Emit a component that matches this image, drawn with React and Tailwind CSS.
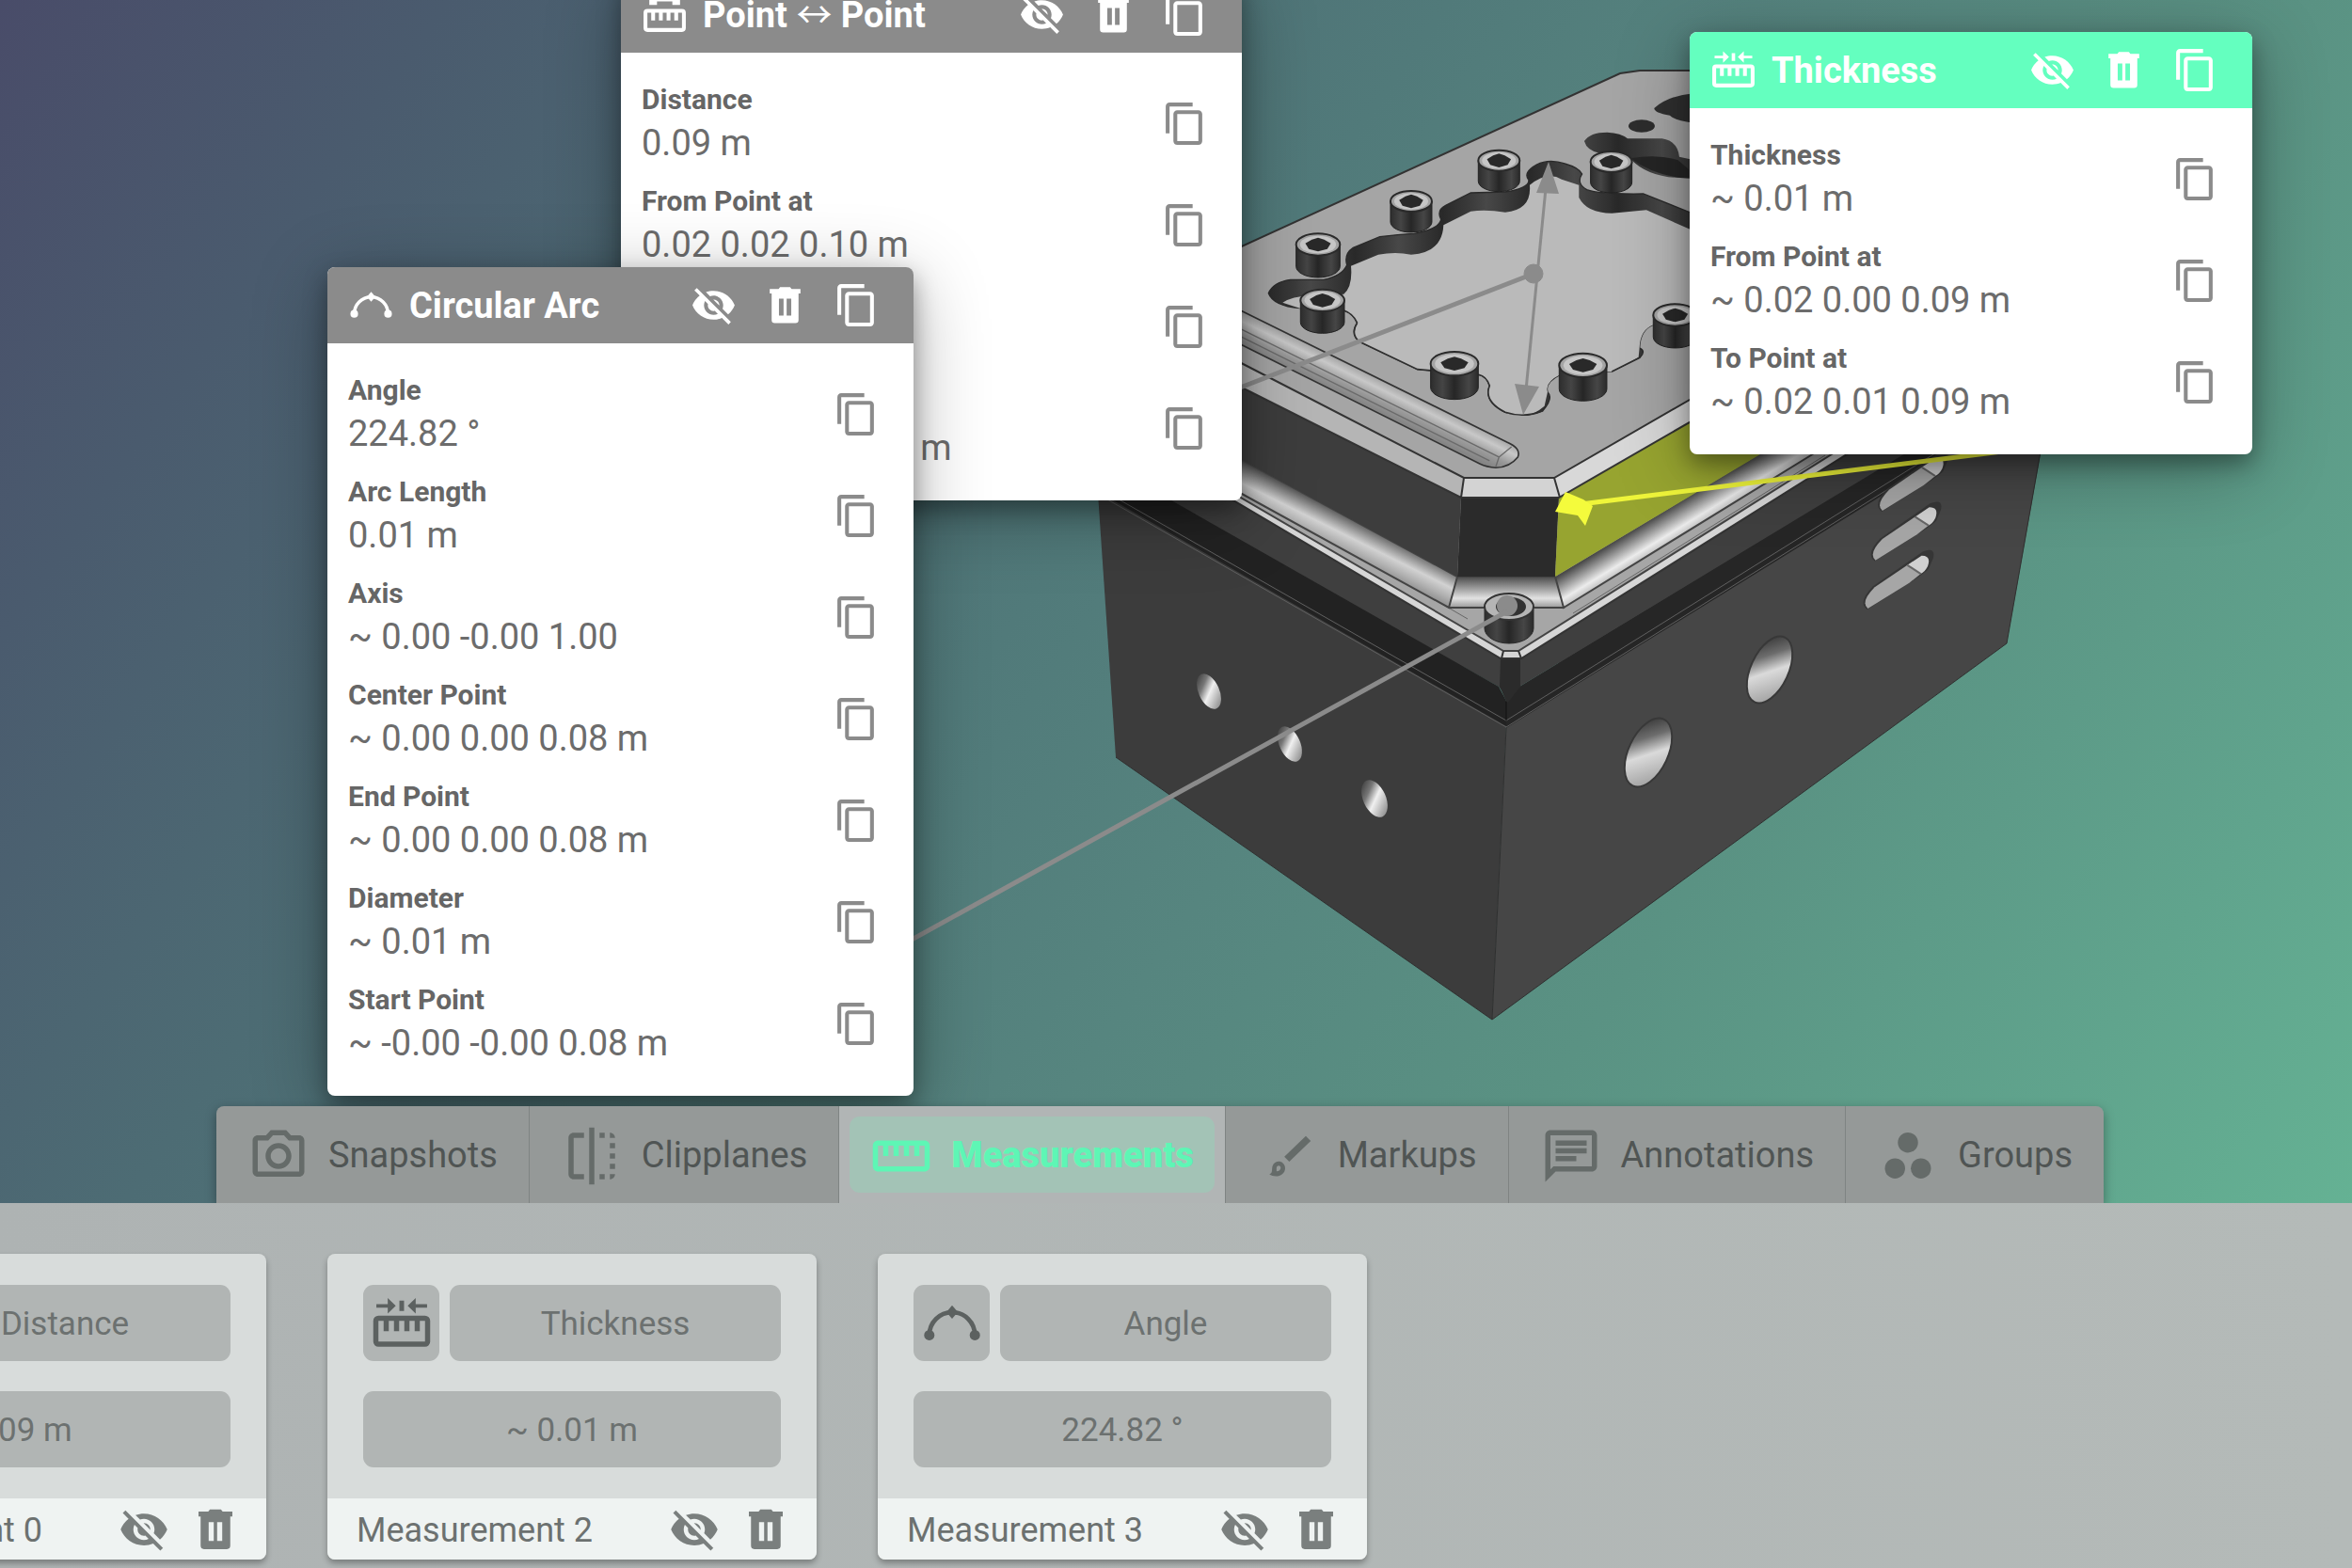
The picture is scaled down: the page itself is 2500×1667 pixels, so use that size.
import React, { useState } from 'react';
import { MdContentCopy, MdVisibilityOff, MdOutlinePhotoCamera, MdFlip, MdStraighten, MdOutlineChat } from 'react-icons/md';

function TrashIcon({ className }) {
    return (
        <svg viewBox="0 0 24 24" fill="currentColor" className={className} aria-hidden="true">
            <path fillRule="evenodd" d="M8.6 3.5l.8-.9h5.2l.8.9H20v2.4H4V3.5zM5 5.900h14v13.800a1.6 1.6 0 0 1-1.6 1.6H6.6A1.6 1.6 0 0 1 5 19.7zM8.8 8.6v8.8h2.4V8.6zM12.8 8.6v8.8h2.4V8.6z" />
        </svg>
    );
}

function Ruler() {
    return (
        <>
            <rect x="2" y="10" width="20" height="10" rx="1" fill="none" stroke="currentColor" strokeWidth="2" />
            <path d="M5 10h2v5H5zM9 10h2v5H9zM13 10h2v5h-2zM17 10h2v5h-2z" />
        </>
    );
}

function ThicknessIcon({ className }) {
    return (
        <svg viewBox="0 0 24 24" fill="currentColor" className={className} aria-hidden="true">
            <Ruler />
            <path d="M2.2 4.5h4.4V2.2L9.7 5.2 6.6 8.2V5.9H2.2zM11.1 3.2h1.8v4h-1.8zM21.8 4.5h-4.4V2.2l-3.1 3 3.1 3V5.9h4.4z" />
        </svg>
    );
}

function DistanceIcon({ className }) {
    return (
        <svg viewBox="0 0 24 24" fill="currentColor" className={className} aria-hidden="true">
            <Ruler />
            <path d="M4 2h4v1.6h8V2h4v5h-4V5.2H8V7H4z" />
        </svg>
    );
}

function ArcIcon({ className }) {
    return (
        <svg viewBox="0 0 24 24" fill="currentColor" className={className} aria-hidden="true">
            <path d="M3.2 16.5a8.8 8.8 0 0 1 17.6 0" fill="none" stroke="currentColor" strokeWidth="1.7" />
            <circle cx="3.2" cy="16.5" r="2" />
            <circle cx="20.8" cy="16.5" r="2" />
            <path d="M12 5l2.2 2.6L12 10.200 9.800 7.600z" />
        </svg>
    );
}

function BrushIcon({ className }) {
    return (
        <svg viewBox="0 0 24 24" fill="currentColor" className={className} aria-hidden="true">
            <path d="M18.900 4.300l1.900 1.900-8.300 8-1.900-1.900z" />
            <path d="M4.800 19c1.500-.4.800-2 1.300-3.300.6-1.500 2.600-2.100 3.900-1s1.200 3.200-.2 4.300c-1.400 1.200-3.700 1-5 0zm2.800-1.100c1.600.1 2.200-1.900.9-2.200-1.300.1-.8 1.400-.9 2.200z" fillRule="evenodd" />
        </svg>
    );
}

function GroupsIcon({ className }) {
    return (
        <svg viewBox="0 0 24 24" fill="currentColor" className={className} aria-hidden="true">
            <circle cx="12" cy="6.800" r="3.900" />
            <circle cx="7" cy="16.800" r="3.900" />
            <circle cx="17" cy="16.800" r="3.900" />
        </svg>
    );
}

const tabs = [
    { id: 'snapshots', label: 'Snapshots', icon: MdOutlinePhotoCamera },
    { id: 'clipplanes', label: 'Clipplanes', icon: MdFlip },
    { id: 'measurements', label: 'Measurements', icon: MdStraighten },
    { id: 'markups', label: 'Markups', icon: BrushIcon },
    { id: 'annotations', label: 'Annotations', icon: MdOutlineChat },
    { id: 'groups', label: 'Groups', icon: GroupsIcon },
];

const measurements = [
    { name: 'Measurement 0', type: 'Distance', value: '0.09 m', icon: DistanceIcon },
    { name: 'Measurement 2', type: 'Thickness', value: '~ 0.01 m', icon: ThicknessIcon },
    { name: 'Measurement 3', type: 'Angle', value: '224.82 °', icon: ArcIcon },
];

const pointRows = [
    ['Distance', '0.09 m'],
    ['From Point at', '0.02 0.02 0.10 m'],
    ['To Point at', '0.02 0.10 0.10 m'],
    ['Direction', '~ 0.00 -0.09 0.00 m'],
];

const arcRows = [
    ['Angle', '224.82 °'],
    ['Arc Length', '0.01 m'],
    ['Axis', '~ 0.00 -0.00 1.00'],
    ['Center Point', '~ 0.00 0.00 0.08 m'],
    ['End Point', '~ 0.00 0.00 0.08 m'],
    ['Diameter', '~ 0.01 m'],
    ['Start Point', '~ -0.00 -0.00 0.08 m'],
];

const thicknessRows = [
    ['Thickness', '~ 0.01 m'],
    ['From Point at', '~ 0.02 0.00 0.09 m'],
    ['To Point at', '~ 0.02 0.01 0.09 m'],
];

// [x, y, radius] of the cap screws around the pocket
const screws = [
    [303, 600, 70],
    [317, 778, 70],
    [600, 462, 66],
    [880, 332, 66],
    [1238, 336, 66],
    [738, 980, 76],
    [1148, 985, 76],
    [1442, 825, 70],
];

// offsets of the three ventilation slots from the lowest one
const slots = [
    [0, 0],
    [20, -122],
    [38, -247],
];

function Screw({ x, y, r }) {
    const ry = r * 0.5;
    return (
        <g>
            <path d={`M${x - r} ${y}v${r}a${r} ${ry} 0 0 0 ${2 * r} 0v${-r}z`} fill="url(#screwBody)" stroke="#222" strokeWidth="3" />
            <ellipse cx={x} cy={y} rx={r} ry={ry} fill="#a4a4a4" stroke="#2a2a2a" strokeWidth="6" />
            <ellipse cx={x} cy={y} rx={r * 0.82} ry={ry * 0.8} fill="#c6c6c6" />
            <path d={`M${x - r * 0.58} ${y - 4}l${r * 0.3} -12l${r * 0.28} -6l${r * 0.28} 6l${r * 0.3} 12l${-r * 0.16} 18l${-r * 0.42} 8l${-r * 0.42} -8z`} fill="#292929" />
        </g>
    );
}

function Scene() {
    return (
        <svg viewBox="0 0 2500 1667" preserveAspectRatio="xMinYMin slice" className="absolute inset-0 h-full w-full" aria-hidden="true">
            <defs>
                <linearGradient id="screwBody">
                    <stop offset="0" stopColor="#2d2d2d" />
                    <stop offset=".25" stopColor="#454545" />
                    <stop offset=".5" stopColor="#262626" />
                    <stop offset=".8" stopColor="#464646" />
                    <stop offset="1" stopColor="#2a2a2a" />
                </linearGradient>
                <linearGradient id="wall" gradientUnits="userSpaceOnUse" x1="0" y1="0" x2="280" y2="0" spreadMethod="repeat">
                    <stop offset="0" stopColor="#484848" />
                    <stop offset=".5" stopColor="#292929" />
                    <stop offset=".8" stopColor="#3a3a3a" />
                    <stop offset="1" stopColor="#484848" />
                </linearGradient>
                <linearGradient id="groove" gradientUnits="userSpaceOnUse" x1="500" y1="1020" x2="455" y2="1112">
                    <stop offset="0" stopColor="#999" />
                    <stop offset=".35" stopColor="#c8c8c8" />
                    <stop offset=".7" stopColor="#999" />
                    <stop offset="1" stopColor="#858585" />
                </linearGradient>
                <linearGradient id="filletLeft" gradientUnits="userSpaceOnUse" x1="1440" y1="550" x2="1421" y2="588">
                    <stop offset="0" stopColor="#4a4a4a" />
                    <stop offset=".5" stopColor="#d2d2d2" />
                    <stop offset=".75" stopColor="#b0b0b0" />
                    <stop offset="1" stopColor="#8a8a8a" />
                </linearGradient>
                <linearGradient id="filletRight" gradientUnits="userSpaceOnUse" x1="1762" y1="548" x2="1784" y2="584">
                    <stop offset="0" stopColor="#4a4a4a" />
                    <stop offset=".55" stopColor="#ececec" />
                    <stop offset="1" stopColor="#8a8a8a" />
                </linearGradient>
                <linearGradient id="filletFront" x1="0" y1="0" x2="0" y2="1">
                    <stop offset="0" stopColor="#4a4a4a" />
                    <stop offset=".7" stopColor="#e2e2e2" />
                    <stop offset="1" stopColor="#999" />
                </linearGradient>
                <linearGradient id="hole" x1=".2" y1="0" x2=".7" y2="1">
                    <stop offset="0" stopColor="#3a3a3a" />
                    <stop offset=".3" stopColor="#777" />
                    <stop offset=".55" stopColor="#f0f0f0" />
                    <stop offset="1" stopColor="#8c8c8c" />
                </linearGradient>
                <linearGradient id="bigHole" x1=".2" y1="0" x2=".7" y2="1">
                    <stop offset="0" stopColor="#333" />
                    <stop offset=".3" stopColor="#6c6c6c" />
                    <stop offset=".55" stopColor="#dadada" />
                    <stop offset="1" stopColor="#a0a0a0" />
                </linearGradient>
            </defs>

            {/* lower housing */}
            <path d="M1164 480L1186 805L1586 1084L1601 770L1400 500z" fill="#3c3c3c" />
            <path d="M1601 770L1586 1084L2133 684L2180 420L1900 420z" fill="#464646" />
            <path d="M1186 805L1586 1084L2133 684L2176 440M1601 774L1586 1084" fill="none" stroke="#303030" strokeWidth="1" />
            <path d="M1601 766V731L1615 730L2060 460L2090 460L2060 490L1601 774z" fill="#262626" />
            <path d="M1164 490L1593 730L1601 740L1615 730L2060 461L1900 420L1300 420L1164 440z" fill="#3f3f3f" />
            <path d="M1166 487L1593 730L1601 745V772L1166 522z" fill="#222" />
            <path d="M1170 520L1601 766L2060 480" fill="none" stroke="#606060" strokeWidth="1" />
            <path d="M1170 527L1601 773L2060 487" fill="none" stroke="#606060" strokeWidth="1" />
            <path d="M1595 698h21v32l-14 18l-8-18z" fill="#2b2b2b" />
            <path d="M1601 746v20" stroke="#111" strokeWidth="1" />

            {/* flange */}
            <path d="M1240 490L1595 700H1617L1990 466L1900 420H1300z" fill="#d6d6d6" stroke="#333" strokeWidth="2" />
            <path d="M1240 483L1598 692H1614L1977 464L1900 420H1300z" fill="#a6a6a6" stroke="#444" strokeWidth="2" />
            <path d="M1598 692L1596 700M1614 692L1617 700" stroke="#333" strokeWidth="2" />
            <path d="M1300 506L1560 658M1672 652L1940 484" stroke="#666" strokeWidth="1" />
            <path d="M1300 478L1549 613L1540 646L1300 514z" fill="url(#filletLeft)" />
            <path d="M1653 613L1890 471L1946 471L1662 646z" fill="url(#filletRight)" />
            <path d="M1549 613H1653L1662 646H1540z" fill="url(#filletFront)" />
            <path d="M1300 478L1549 613L1540 646L1300 514M1549 613H1653L1662 646H1540M1653 613L1662 646L1946 471" fill="none" stroke="#444" strokeWidth="2" />

            {/* raised block */}
            <path d="M1300 400L1553 528L1549 613L1300 478z" fill="#3d3d3d" />
            <path d="M1553 529H1657L1653 613H1549z" fill="#2b2b2b" />
            <path d="M1657 529L1860 412L1990 412L1653 613z" fill="#97a430" />
            <path d="M1300 376L1556 508L1553 529L1300 402z" fill="#b5b5b5" />
            <path d="M1556 508H1652L1658 529H1553z" fill="#d3d3d3" />
            <path d="M1652 508L1860 388V412L1658 529z" fill="#d8d8d8" />
            <path d="M1300 271L1722 78L1743 75H1900V366L1652 508H1556L1300 376z" fill="#a5a5a5" />
            <path d="M1300 271L1722 78L1743 75H1900M1300 376L1556 508H1652L1860 388M1556 508L1553 529M1652 508L1658 529M1300 402L1553 529H1657L1860 412" fill="none" stroke="#333" strokeWidth="2" />

            {/* details of the top face */}
            <g transform="translate(1300 60) scale(.3333)">
                <path d="M30 797L905 1230Q952 1250 940 1278Q915 1310 870 1312Q840 1310 820 1300L30 905z" fill="url(#groove)" />
                <path d="M30 797L905 1230Q952 1250 940 1278Q915 1310 870 1312Q840 1310 820 1300L30 905" fill="none" stroke="#333" strokeWidth="5" />
                <path d="M30 856L880 1278L920 1245M880 1278L870 1308M30 880L850 1290" fill="none" stroke="#6a6a6a" strokeWidth="4" />
                <path
                    d="M145 755Q160 720 215 712H320Q380 700 395 665Q385 630 415 610L500 575Q560 568 610 565Q690 550 695 520Q680 490 710 475L790 435L900 432Q975 420 975 395Q955 370 1000 345Q1040 325 1090 342Q1135 355 1145 375Q1125 405 1160 425Q1200 440 1340 438L1520 510V830L1375 855Q1330 870 1328 930Q1350 940 1330 960L1240 1005L1075 1015Q1025 1040 1035 1070Q1055 1090 1020 1130Q960 1155 900 1135Q830 1100 850 1050Q840 1020 815 1015L620 998L435 910Q405 885 428 850Q415 820 385 810L245 803Q160 795 145 755z"
                    fill="url(#wall)"
                    stroke="#2a2a2a"
                    strokeWidth="4"
                />
                <path
                    d="M190 785Q230 760 290 765L385 758Q414 735 408 668L495 632Q550 622 600 632Q700 625 703 538L790 494Q840 488 900 497Q985 490 978 410Q1035 365 1080 392L1135 410V450Q1160 500 1240 500L1350 490L1520 565V830L1375 855Q1330 870 1328 930L1325 960L1240 1005L1075 1015Q1025 1040 1035 1070L1025 1115Q990 1145 960 1145Q930 1150 900 1135Q830 1100 850 1050Q840 1020 815 1015L620 998L435 910Q405 885 428 850Q415 820 385 810L245 803z"
                    fill="#bababa"
                />
                <path d="M428 850Q405 885 435 910L620 998L815 1015Q840 1020 850 1050Q830 1100 900 1135Q960 1155 1020 1130M1240 1005L1330 960M385 810Q415 820 428 850" fill="none" stroke="#2f2f2f" strokeWidth="5" />
                <ellipse cx="1335" cy="222" rx="42" ry="20" fill="#2d2d2d" />
                <path d="M1152 270Q1170 242 1225 242Q1270 244 1290 262H1400Q1450 270 1455 320L1500 330V390L1420 385Q1330 370 1290 315L1200 308Q1160 300 1152 270z" fill="url(#wall)" />
                <path d="M1300 325Q1380 310 1450 330L1485 360V388Q1380 385 1300 325z" fill="#252525" />
                <path d="M1375 165Q1420 125 1500 118V212Q1440 205 1425 188Q1375 180 1375 165z" fill="#303030" />
                {screws.map(([x, y, r]) => (
                    <Screw key={`${x}-${y}`} x={x} y={y} r={r} />
                ))}
            </g>

            {/* bores */}
            <g fill="url(#hole)">
                <ellipse cx="1285" cy="735" rx="11" ry="20" transform="rotate(-24 1285 735)" />
                <ellipse cx="1371" cy="791" rx="11" ry="20" transform="rotate(-24 1371 791)" />
                <ellipse cx="1461" cy="849" rx="12" ry="21" transform="rotate(-24 1461 849)" />
            </g>
            <g fill="url(#bigHole)" stroke="#383838" strokeWidth="2">
                <ellipse cx="1881" cy="712" rx="20" ry="38" transform="rotate(25 1881 712)" />
                <ellipse cx="1752" cy="800" rx="21" ry="39" transform="rotate(25 1752 800)" />
            </g>
            <g transform="translate(1560 440) scale(.4082 .4209)">
                {slots.map(([dx, dy]) => (
                    <g key={dy} transform={`translate(${dx} ${dy})`}>
                        <path d="M1040 494Q1015 475 1055 436L1185 348Q1220 335 1212 365L1200 392Q1190 402 1150 427z" fill="#363636" />
                        <path d="M1042 492Q1022 475 1060 438L1145 382L1180 404L1150 427z" fill="#a6a6a6" />
                        <path d="M1145 382L1182 358Q1208 358 1198 385Q1190 400 1180 404z" fill="#d0d0d0" />
                        <path d="M1145 382L1180 404" stroke="#666" strokeWidth="5" />
                    </g>
                ))}
            </g>

            {/* corner screw */}
            <path d="M1578 648v20a26 16 0 0 0 52 0v-20z" fill="url(#screwBody)" stroke="#2a2a2a" strokeWidth="1" />
            <ellipse cx="1604" cy="645" rx="26" ry="14" fill="#b5b5b5" stroke="#333" strokeWidth="2" />
            <ellipse cx="1606" cy="645" rx="16" ry="10" fill="#333" />
            <circle cx="1602" cy="644" r="11" fill="#8b8b8b" />

            {/* leaders */}
            <g stroke="#8b8b8b" fill="#8b8b8b">
                <path d="M1602 650L940 1015M1630 291L1290 423" strokeWidth="5" />
                <path d="M1645 180L1620 435" strokeWidth="3" />
                <circle cx="1630" cy="291" r="10" />
                <path d="M1646 172L1633 205L1657 206zM1610 408L1636 411L1619 441z" stroke="none" />
            </g>
            <path d="M1680 536L2160 476" stroke="#eff53a" strokeWidth="5" />
            <path d="M1653 544L1664 523L1683 531L1693 538L1685 559L1677 548z" fill="#f4fb3c" />
        </svg>
    );
}

function MeasureCard({ title, icon: Icon, rows, active, className }) {
    return (
        <section className={`absolute overflow-hidden rounded-lg bg-white shadow-[0_10px_24px_rgba(0,0,0,0.35),0_16px_80px_rgba(0,0,0,0.3)] ${className}`}>
            <header className={`flex h-[81px] items-center pl-[22px] pr-9 text-white ${active ? 'bg-[#64ffbf]' : 'bg-[#8b8b8b]'}`}>
                <Icon className="mr-4 size-[49px] shrink-0" />
                <h2 className="flex-1 whitespace-nowrap text-[38px] leading-[48px] font-bold">{title}</h2>
                <div className="flex gap-[27px]">
                    <button type="button" aria-label="Hide"><MdVisibilityOff className="size-[49px]" /></button>
                    <button type="button" aria-label="Delete"><TrashIcon className="size-[49px]" /></button>
                    <button type="button" aria-label="Copy all"><MdContentCopy className="size-[49px]" /></button>
                </div>
            </header>
            <dl className="pt-[21px] pb-[23px]">
                {rows.map(([label, value]) => (
                    <div key={label} className="flex h-[108px] items-center justify-between pl-[22px] pr-9">
                        <div className="whitespace-nowrap pt-1">
                            <dt className="text-[30px] leading-[38px] font-bold text-[#666]">{label}</dt>
                            <dd className="text-[38px] leading-[54px] text-[#6c6c6c]">{value}</dd>
                        </div>
                        <button type="button" aria-label={`Copy ${label}`} className="text-[#8b8b8b]">
                            <MdContentCopy className="size-[49px]" />
                        </button>
                    </div>
                ))}
            </dl>
        </section>
    );
}

function MeasurementTile({ name, type, value, icon: Icon }) {
    return (
        <article className="w-[520px] shrink-0 overflow-hidden rounded-lg bg-[#d8dcdb] text-[#6c7170] shadow-[0_4px_6px_rgba(0,0,0,0.3)]">
            <div className="flex flex-col gap-8 px-[38px] py-[33px] text-[35px]">
                <div className="flex gap-[11px]">
                    <div className="flex size-[81px] items-center justify-center rounded-[11px] bg-[#b1b5b4] text-[#5c6160]">
                        <Icon className="size-[66px]" />
                    </div>
                    <div className="flex h-[81px] flex-1 items-center justify-center rounded-[11px] bg-[#b1b5b4] pt-1">{type}</div>
                </div>
                <div className="flex h-[81px] items-center justify-center rounded-[11px] bg-[#b1b5b4] pt-1">{value}</div>
            </div>
            <footer className="flex h-[65px] items-center bg-[#eff3f2] pl-[31px] pr-[27px]">
                <span className="flex-1 whitespace-nowrap pt-0.5 text-[36px]">{name}</span>
                <div className="flex gap-[22px] text-[#7a7f7e]">
                    <button type="button" aria-label={`Hide ${name}`}><MdVisibilityOff className="size-[54px]" /></button>
                    <button type="button" aria-label={`Delete ${name}`}><TrashIcon className="size-[54px]" /></button>
                </div>
            </footer>
        </article>
    );
}

function App() {
    const [activeTab, setActiveTab] = useState('measurements');

    return (
        <div className="relative flex min-h-screen flex-col overflow-hidden bg-linear-[125deg,#494c69_0%,#4a5b6e_13%,#4d6c74_28%,#517a7a_42%,#56857f_53%,#5a9283_67%,#60a48d_82%,#68bb98_100%] font-['Roboto',sans-serif]">
            <Scene />

            <MeasureCard
                title={<>Point <span className="font-['Noto_Sans_CJK_JP',sans-serif] leading-none font-normal">↔</span> Point</>}
                icon={DistanceIcon}
                rows={pointRows}
                className="-top-[25px] left-[660px] w-[660px]"
            />
            <MeasureCard title="Circular Arc" icon={ArcIcon} rows={arcRows} className="top-[284px] left-[348px] w-[623px]" />
            <MeasureCard title="Thickness" icon={ThicknessIcon} rows={thicknessRows} active className="top-[34px] left-[1796px] w-[598px]" />

            <div className="relative mt-auto">
                <nav role="tablist" className="flex justify-center pr-[34px]">
                    <div className="flex overflow-hidden rounded-t-lg shadow-[0_4px_12px_rgba(0,0,0,0.35)]">
                        {tabs.map(({ id, label, icon: Icon }) => (
                            <button
                                key={id}
                                type="button"
                                role="tab"
                                aria-selected={activeTab === id}
                                onClick={() => setActiveTab(id)}
                                className={`border-r border-[#7f8483] p-[11px] last:border-r-0 ${activeTab === id ? 'bg-[#b1b5b5]' : 'bg-[#959998]'}`}
                            >
                                <span
                                    className={`flex h-[81px] items-center gap-5 rounded-[11px] px-[22px] pt-0.5 text-[38px] ${
                                        activeTab === id ? 'bg-[#a3c3b6] font-black text-[#5ef6b5]' : 'text-[#505554]'
                                    }`}
                                >
                                    <Icon className={`size-[66px] ${activeTab === id ? '' : 'text-[#656b69]'}`} />
                                    {label}
                                </span>
                            </button>
                        ))}
                    </div>
                </nav>
                <div className="relative overflow-hidden bg-linear-to-r from-[#aeb3b3] to-[#b4bab8] pt-[54px] pb-[9px]">
                    <div className="-ml-[237px] flex gap-[65px]">
                        {measurements.map((m) => (
                            <MeasurementTile key={m.name} {...m} />
                        ))}
                    </div>
                </div>
            </div>
        </div>
    );
}

export default App;
